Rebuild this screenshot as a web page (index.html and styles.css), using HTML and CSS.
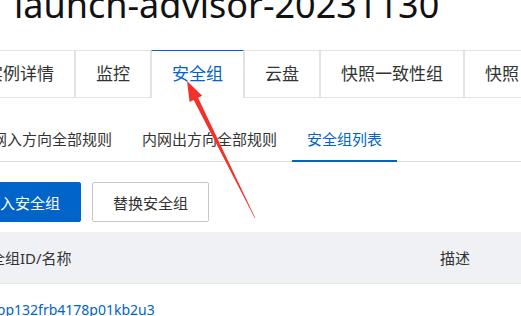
FILE: index.html
```html
<!DOCTYPE html>
<html lang="zh-CN">
<head>
    <meta charset="UTF-8">
    <meta name="viewport" content="width=device-width, initial-scale=1.0">
    <title>launch-advisor-20231130</title>
    <link rel="stylesheet" href="styles.css">
</head>
<body>
    <h1 class="title">launch-advisor-20231130</h1>

    <div class="page">
        <!-- 主标签 -->
        <ul class="tabs">
            <li class="tab">实例详情</li>
            <li class="tab">监控</li>
            <li class="tab active">安全组</li>
            <li class="tab">云盘</li>
            <li class="tab">快照一致性组</li>
            <li class="tab">快照</li>
        </ul>

        <!-- 子标签 -->
        <ul class="subtabs">
            <li class="subtab">内网入方向全部规则</li>
            <li class="subtab">内网出方向全部规则</li>
            <li class="subtab active">安全组列表</li>
        </ul>

        <div class="actions">
            <button class="btn btn-primary">加入安全组</button>
            <button class="btn">替换安全组</button>
        </div>

        <div class="table">
            <div class="row head">
                <div class="cell">安全组ID/名称</div>
                <div class="cell">描述</div>
            </div>
            <div class="row">
                <div class="cell"><a href="#" class="link">sg-bp132frb4178p01kb2u3</a></div>
                <div class="cell"></div>
            </div>
        </div>
    </div>

    <!-- 红色箭头标注 -->
    <svg class="arrow" width="521" height="316" viewBox="0 0 521 316">
        <polygon fill="#f2312b" points="187,81 202.2,95.8 198.1,97.8 255.3,218.1 254.7,218.1 193.7,100 189.6,102"/>
    </svg>
</body>
</html>
```

FILE: styles.css
```css
* {
    box-sizing: border-box;
}

body {
    margin: 0;
    width: 521px;
    height: 316px;
    overflow: hidden;
    position: relative;
    background: #fff;
    color: #333;
    font-family: "Noto Sans", "Noto Sans CJK SC", sans-serif;
}

.title {
    margin: -13px 0 0 0;
    padding-left: 14px;
    height: 63px;
    font-size: 36px;
    line-height: 36px;
    font-weight: normal;
    color: #111;
    white-space: nowrap;
}

.page {
    margin-left: -35px;
    width: 700px;
}

/* 主标签 */
.tabs {
    display: flex;
    list-style: none;
    margin: 0;
    padding: 0;
    border-bottom: 1px solid #e3e3e3;
    height: 48px;
}

.tab {
    padding: 0 20px;
    font-size: 17px;
    line-height: 46px;
    border: 1px solid #e3e3e3;
    border-bottom: none;
    color: #333;
    white-space: nowrap;
    background: #fff;
}

.tab.active {
    color: #0064c8;
    border-top: 1px solid #0064c8;
    height: 48px;
    margin-bottom: -1px;
}

/* 子标签 */
.subtabs {
    display: flex;
    list-style: none;
    margin: 20px 0 0 -3px;
    padding: 0;
    border-bottom: 1px solid #dedede;
}

.subtab {
    padding: 0 15px;
    font-size: 15px;
    line-height: 42px;
    color: #333;
    white-space: nowrap;
    border-bottom: 2px solid transparent;
    margin-bottom: -1px;
}

.subtab.active {
    color: #0064c8;
    border-bottom-color: #0064c8;
}

.actions {
    display: flex;
    gap: 11px;
    margin: 20px 0 0 -1px;
}

.btn {
    height: 40px;
    padding: 0 20px;
    font-family: inherit;
    font-size: 15px;
    color: #333;
    background: #fff;
    border: 1px solid #c4c6cc;
    border-radius: 2px;
}

.btn-primary {
    background: #0064c8;
    border-color: #0064c8;
    color: #fff;
}

.table {
    margin-top: 10px;
}

.row {
    display: grid;
    grid-template-columns: 459px 1fr;
    height: 52px;
    align-items: center;
    border-bottom: 1px solid #e3e5e9;
}

.row.head {
    background: #eff1f5;
}

.cell {
    padding: 0 16px 0 12px;
    font-size: 14px;
    white-space: nowrap;
}

.row.head .cell {
    font-size: 15px;
}

.row.head .cell:first-child {
    padding-left: 10px;
}

.row .cell:last-child {
    padding-left: 16px;
}

.link {
    color: #0064c8;
    text-decoration: none;
}

.arrow {
    position: absolute;
    top: 0;
    left: 0;
    pointer-events: none;
}
```
